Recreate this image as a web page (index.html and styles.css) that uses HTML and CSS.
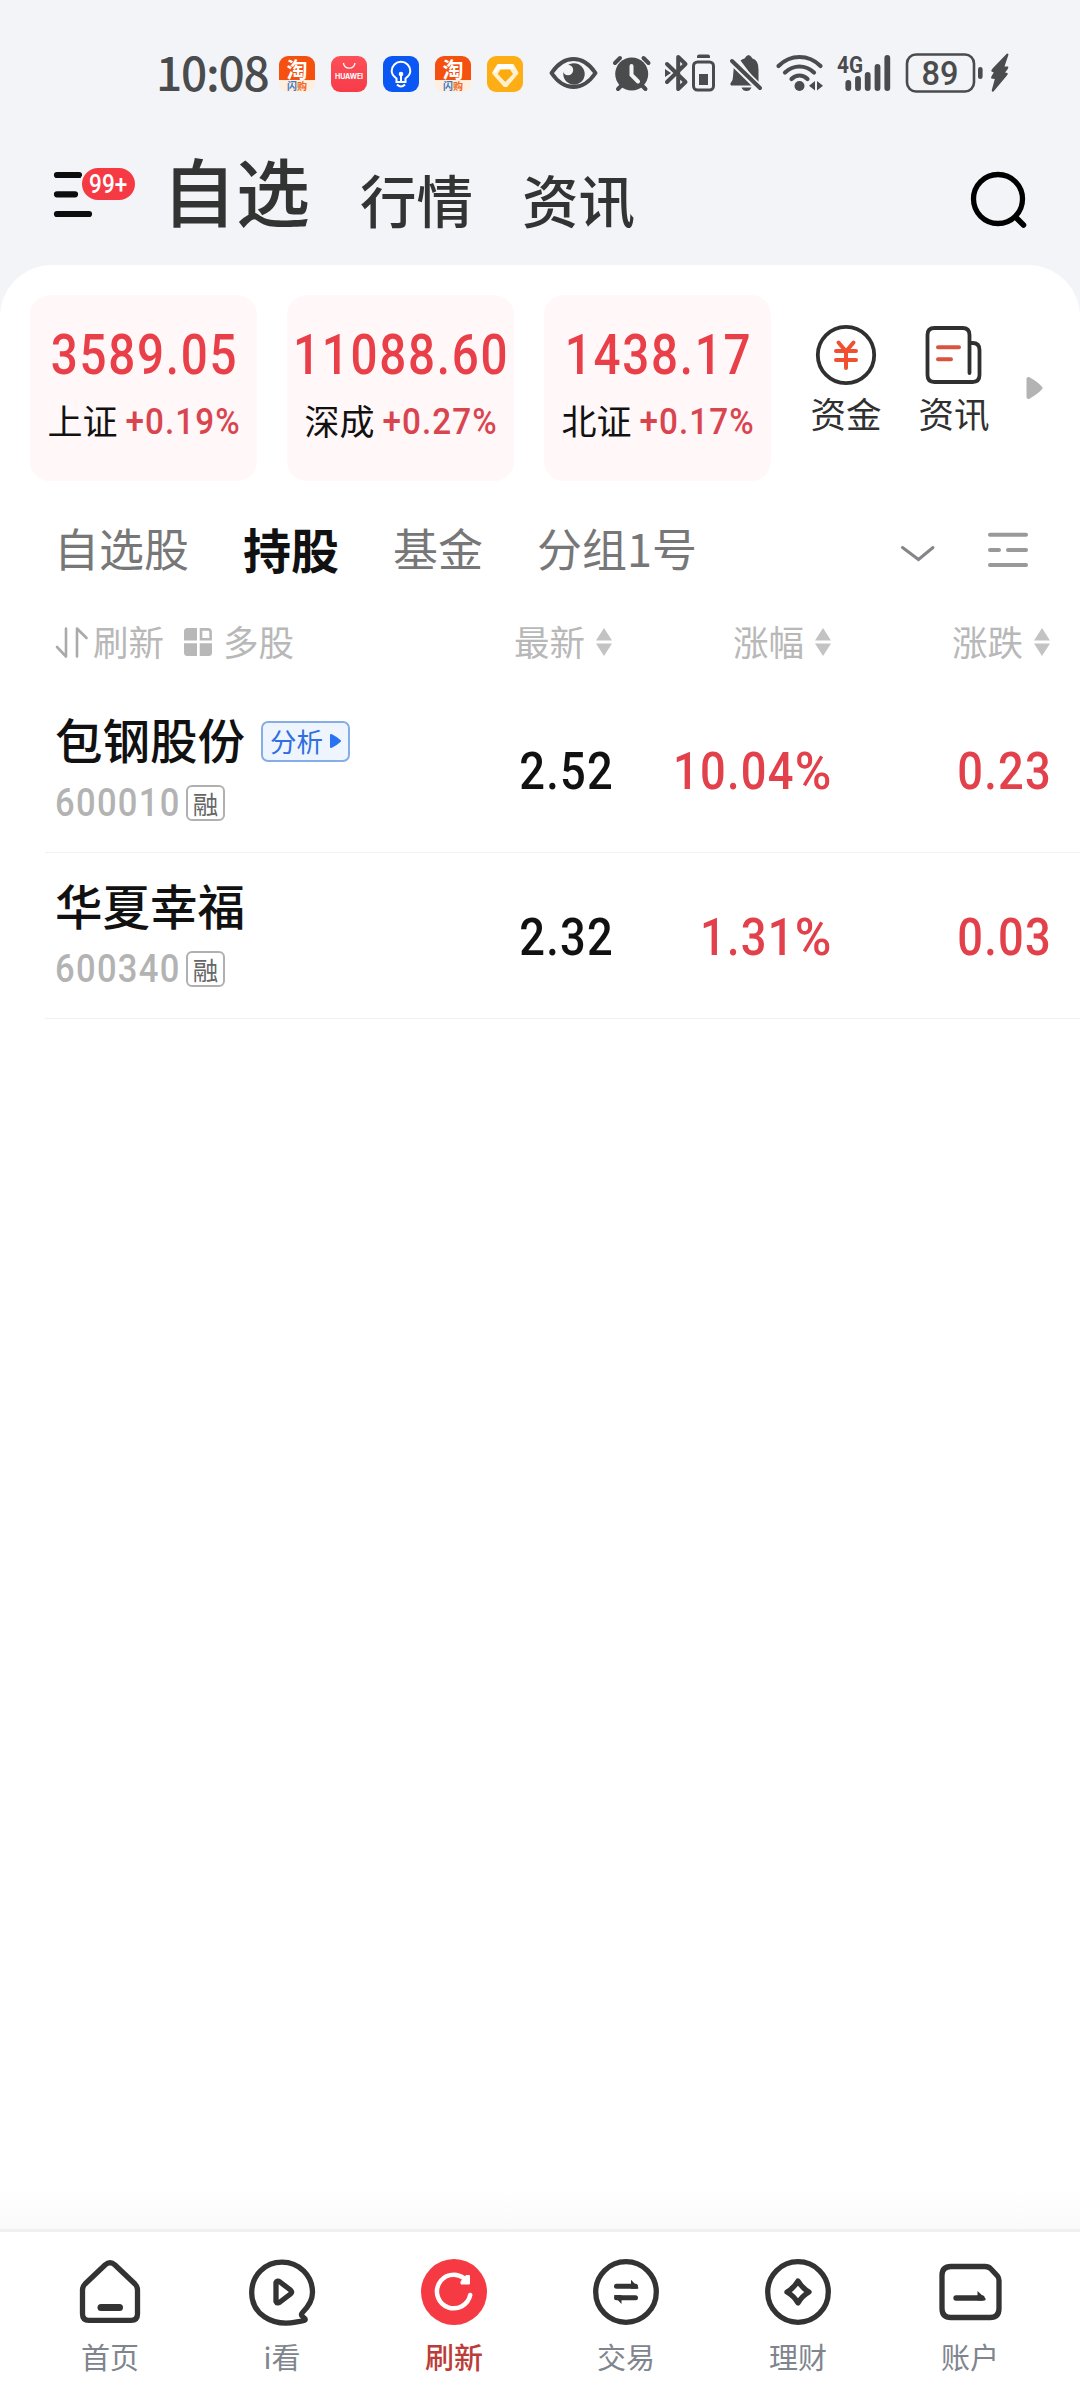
FILE: index.html
```html
<!DOCTYPE html>
<html lang="zh-CN">
<head>
<meta charset="utf-8">
<title>自选</title>
<link rel="stylesheet" href="styles.css">
</head>
<body>
<div class="app">
  <header class="status">
    <span class="clock">10:08</span>
    <div class="notices">
      <span class="app-icon taobao"><b>淘</b><i><em>闪</em>购</i></span>
      <span class="app-icon huawei">
        <svg width="36" height="14" viewBox="0 0 36 14"><path d="M12.500 7a5.700 5.200 0 0 0 11.400 0" fill="none" stroke="#fff" stroke-width="1.300"/></svg>
        <b>HUAWEI</b>
      </span>
      <span class="app-icon bulb">
        <svg width="36" height="36" viewBox="0 0 36 36" fill="none" stroke="#fff" stroke-width="2"><path d="M13.500 26v-3.500C10 20 8.700 17.500 8.700 15a9.300 9.300 0 0 1 18.600 0c0 2.500-1.300 5-4.800 7.500V26zM14 28.500q4 4 8 0M18 18v8"/><circle cx="18" cy="18" r="1.300" fill="#fff"/></svg>
      </span>
      <span class="app-icon taobao"><b>淘</b><i><em>闪</em>购</i></span>
      <span class="app-icon gem">
        <svg width="36" height="36" viewBox="0 0 36 36"><path d="M11 9h15l4.500 8L19.500 30h-2L6 17z" fill="#fff1cf" stroke="#fff1cf" stroke-width="2" stroke-linejoin="round"/><path d="M11 8h14l2.500 5H12l-4 4-2-1z" fill="#fff"/><path d="M13.500 13.500h9.500l3 4.500-7.700 8L10.700 18z" fill="#fbab10"/></svg>
      </span>
    </div>
    <div class="system">
      <svg width="66" height="46" viewBox="540 50 66 46"><path d="M551.500 73Q561 59 573.500 59T595.500 73Q586 87 573.500 87T551.500 73z" fill="none" stroke="#4a4b4d" stroke-width="4" stroke-linejoin="round"/><circle cx="574" cy="74" r="10.700" fill="#4a4b4d"/><circle cx="568" cy="70" r="5.200" fill="#f3f4f8"/></svg>
      <svg width="52" height="46" viewBox="606 50 52 46"><g fill="none" stroke="#4a4b4d" stroke-width="4" stroke-linecap="round"><path d="M615 63l5-5M648.500 63l-5-5M618 89l4-4M645.500 89l-4-4"/></g><circle cx="631.700" cy="74" r="16.500" fill="#4a4b4d"/><path d="M631.500 66v9l6.500 6.500" fill="none" stroke="#f3f4f8" stroke-width="4" stroke-linecap="round"/></svg>
      <svg width="64" height="46" viewBox="658 50 64 46"><g fill="none" stroke="#4a4b4d" stroke-width="4" stroke-linejoin="round" stroke-linecap="round"><path d="M667 64l18.500 18-7.300 7V57l7.300 7-18.500 18"/><rect x="693.500" y="62" width="20" height="28" rx="4" stroke-width="3"/></g><path d="M665 69l6 4-6 4zM697 56.500q0-2 2-2h9q2 0 2 2v1.500h-13zM699 74h9v11h-9z" fill="#4a4b4d"/></svg>
      <svg width="48" height="46" viewBox="722 50 48 46"><g fill="#4a4b4d"><path d="M740.500 60.500q2-1.500 4-2 2-3.500 4-3.500t4 3.500q6 1.500 6 11v15zM734 65l20 20.500h-23q-1.500-1.500 0-3 2-2 2-6zM741.500 87.500h10q-1.500 3.500-5 3.500t-5-3.500z"/></g><path d="M731 60l29 28.500" stroke="#f3f4f8" stroke-width="8"/><path d="M732 61l28 27" stroke="#4a4b4d" stroke-width="4" stroke-linecap="round"/></svg>
      <svg width="60" height="46" viewBox="770 50 60 46"><g fill="none" stroke="#4a4b4d" stroke-width="4.200" stroke-linecap="round"><path d="M778.500 66q9-9 21-9t21 9M785 72.500q6.500-6 14.500-6t14.500 6M791.500 79q3.500-3.500 8-3.500t8 3.500"/></g><circle cx="799.500" cy="86" r="5" fill="#4a4b4d"/><path d="M815 81v9.500l-6-4.800zM817 81v9.500l6-4.800z" fill="#4a4b4d"/></svg>
      <svg width="70" height="46" viewBox="830 50 70 46"><text class="net" x="837" y="72.500" textLength="26" lengthAdjust="spacingAndGlyphs">4G</text><g stroke="#4a4b4d" stroke-width="5.800" stroke-linecap="round"><path d="M848.300 83v5M858 79v9M867.700 75v13M877.500 67v21M887.300 58v30"/></g></svg>
      <svg width="115" height="46" viewBox="900 50 115 46"><rect x="907" y="54.500" width="67" height="37" rx="9" fill="none" stroke="#4a4b4d" stroke-width="2.600"/><rect x="978" y="67" width="4.600" height="12" rx="2.300" fill="#4a4b4d"/><path d="M1007 53.500q2 0 1.200 2l-3.700 11h3.500q1.500 1-3 6l2.500.5q1 1-1 3l-13 15.500q-2 .8-1.700-1.500l3-11-3.500-.5q-1-.8 2.500-6l-2.300-1q-.8-1 1.500-3.500z" fill="#4a4b4d"/><text class="charge" x="921.500" y="84.500" textLength="37" lengthAdjust="spacingAndGlyphs">89</text></svg>
    </div>
  </header>

  <nav class="top">
    <div class="menu">
      <svg width="46" height="50" viewBox="52 170 46 50"><path d="M57 175h22M57 194.300h18M57 214h32" stroke="#0d0d0d" stroke-width="6.200" stroke-linecap="round"/></svg>
      <span class="count"><span>99+</span></span>
    </div>
    <a class="title on">自选</a>
    <a class="title quotes">行情</a>
    <a class="title news">资讯</a>
    <svg class="search" width="64" height="64" viewBox="966 168 64 64" fill="none" stroke="#000" stroke-linecap="round"><circle cx="998" cy="199" r="24.500" stroke-width="5.300"/><path d="M1015.500 217l8 8" stroke-width="5.500"/></svg>
  </nav>

  <main class="panel">
    <section class="indices">
      <div class="card"><div class="value"><span>3589.05</span></div><div class="change">上证<span class="pct"><span>+0.19%</span></span></div></div>
      <div class="card"><div class="value"><span>11088.60</span></div><div class="change">深成<span class="pct"><span>+0.27%</span></span></div></div>
      <div class="card"><div class="value"><span>1438.17</span></div><div class="change">北证<span class="pct"><span>+0.17%</span></span></div></div>
      <div class="quick">
        <svg width="64" height="64" viewBox="814 323 64 64" fill="none" stroke-linecap="round"><circle cx="846" cy="355" r="28.200" stroke="#303030" stroke-width="3.800"/><g stroke="#ee5030" stroke-width="4"><path d="M838.500 342.500l7.500 9 7.500-9M836 351h20M836 360h20M846 352v16"/></g></svg>
        <span>资金</span>
      </div>
      <div class="quick">
        <svg width="64" height="64" viewBox="923 323 64 64" fill="none" stroke-linecap="round"><path d="M970.500 373v-38q0-7-7-7h-28q-7 0-7 7v40q0 7 7 7h38q7 0 7-7v-25q0-7-7-7h-2" stroke="#303030" stroke-width="3.800"/><path d="M939 347.200h21M939 359.200h13" stroke="#d9543e" stroke-width="4"/></svg>
        <span>资讯</span>
      </div>
      <svg class="more" width="18" height="24" viewBox="1025 376 18 24"><path d="M1028.500 379v18q8-4.500 12-9-4-4.500-12-9z" fill="#b3b3b3" stroke="#b3b3b3" stroke-width="4" stroke-linejoin="round"/></svg>
    </section>

    <nav class="groups">
      <a>自选股</a><a class="on">持股</a><a>基金</a><a>分组1号</a>
      <svg width="128" height="44" viewBox="900 528 128 44" fill="none" stroke-linecap="round"><path d="M902.500 547.500l16 12 14.500-12" stroke="#85858a" stroke-width="3"/><path d="M990 534.700h36M990 550h9M1008 550h18M990 565h36" stroke="#999" stroke-width="4"/></svg>
    </nav>

    <div class="heads">
      <svg width="34" height="34" viewBox="55 625 34 34"><path d="M57 651l9 9.500V632.500M77 660.500V632.500l9.500 9.500" transform="translate(0 -4)" fill="none" stroke="#aaa" stroke-width="2.600" stroke-linecap="round" stroke-linejoin="round"/></svg>
      <span class="refresh">刷新</span>
      <svg class="tiles" width="28" height="28" viewBox="0 0 28 28" fill="#b8b8b8"><path d="M3.500 0H13v12.500H0v-9Q0 0 3.500 0zM0 15.200h13V28H3.500Q0 28 0 24.500zM15.700 15.200H28v9.300q0 3.500-3.500 3.500h-8.800z"/><path d="M17 1.400h7q2.600 0 2.600 2.600v7.300H17z" fill="none" stroke="#b8b8b8" stroke-width="2.600"/></svg>
      <span class="multi">多股</span>
      <span class="col price">最新<svg width="16" height="30" viewBox="0 0 16 30"><path d="M8 1l8 12.500H0zM8 29l8-12.500H0z"/></svg></span>
      <span class="col">涨幅<svg width="16" height="30" viewBox="0 0 16 30"><path d="M8 1l8 12.500H0zM8 29l8-12.500H0z"/></svg></span>
      <span class="col">涨跌<svg width="16" height="30" viewBox="0 0 16 30"><path d="M8 1l8 12.500H0zM8 29l8-12.500H0z"/></svg></span>
    </div>

    <div class="stock">
      <div class="who">
        <div class="name">包钢股份<span class="tag">分析<svg width="12" height="16" viewBox="0 0 12 16"><path d="M1 2v12q6-3 9-6-3-3-9-6z" fill="#2a72f5" stroke="#2a72f5" stroke-width="2" stroke-linejoin="round"/></svg></span></div>
        <div class="code"><span class="digits"><span>600010</span></span><span class="margin">融</span></div>
      </div>
      <div class="num"><span>2.52</span></div>
      <div class="num up"><span>10.04<i>%</i></span></div>
      <div class="num up"><span>0.23</span></div>
    </div>
    <div class="stock">
      <div class="who">
        <div class="name">华夏幸福</div>
        <div class="code"><span class="digits"><span>600340</span></span><span class="margin">融</span></div>
      </div>
      <div class="num"><span>2.32</span></div>
      <div class="num up"><span>1.31<i>%</i></span></div>
      <div class="num up"><span>0.03</span></div>
    </div>
  </main>

  <nav class="tabbar">
    <a><svg width="68" height="68" viewBox="76 2258 68 68" fill="none" stroke="#333" stroke-width="5.300"><path d="M105 2265.500q5-4.500 10 0l20 19q2.500 2.500 2.500 6v24q0 6.300-6.500 6.300H89q-6.500 0-6.500-6.300v-24q0-3.500 2.500-6z" transform="translate(0 -.5)" stroke-linejoin="round"/><path d="M101 2307.500h18.500" stroke-width="7" stroke-linecap="round"/></svg>首页</a>
    <a><svg width="68" height="68" viewBox="248 2258 68 68" fill="none" stroke="#333" stroke-width="5.300" stroke-linejoin="round"><path d="M303 2317c-2-1.500-2-3-.5-4.500 6.500-6.500 10-13 10-20 0-17-13.500-30.300-30.500-30.300s-30.300 13-30.300 30.500c0 21 20 34 44 29.500 4-.7 7.500-.8 9.300-2.200.8-1.500-.5-2-2-3z"/><path d="M276 2282.500q1-2.500 4-.5l10.500 8q2 2 0 4L280 2302q-3 2-4-.5z"/></svg>i看</a>
    <a class="on"><svg width="68" height="68" viewBox="420 2258 68 68"><circle cx="454" cy="2292" r="33" fill="#f63a44"/><path d="M463.500 2277.800A16.800 16.800 0 1 0 470.200 2295" fill="none" stroke="#fff" stroke-width="4.500" stroke-linecap="round"/><path d="M469.500 2275.500v8.500h-8.500v-2.500l5-6z" fill="#fff" stroke="#fff" stroke-width="1"/></svg>刷新</a>
    <a><svg width="68" height="68" viewBox="592 2258 68 68" fill="none" stroke="#333" stroke-width="5.300"><circle cx="626" cy="2292" r="30.300"/><path d="M616.500 2286.300h19M616.500 2297.700h19" stroke-linecap="round" stroke-width="5"/><path d="M631 2288.800v-9l7.500 8-.5 1zM621.500 2295v9l-7.500-8 .5-1z" fill="#333" stroke="none"/></svg>交易</a>
    <a><svg width="68" height="68" viewBox="764 2258 68 68" fill="none" stroke="#333" stroke-width="5.300"><circle cx="798" cy="2292" r="30.300"/><path d="M798 2281q4 7 11 11-7 4-11 11-4-7-11-11 7-4 11-11z" stroke-linejoin="round"/></svg>理财</a>
    <a><svg width="68" height="68" viewBox="936 2258 68 68" fill="none" stroke="#333" stroke-width="5.300"><path d="M951 2266.500h34q3.500 0 6 2.500l6.500 7q1.500 2 1.500 4.500v28q0 9-9 9h-39q-9 0-9-9v-33q0-9 9-9z" stroke-linejoin="round"/><path d="M956 2298h26" stroke-linecap="round"/><path d="M977.500 2297v-6l8 7.500q.7 2-1 2.100h-7z" fill="#333" stroke="none"/></svg>账户</a>
  </nav>
</div>
</body>
</html>
```
FILE: styles.css
```css
* { box-sizing: border-box; }
body {
  margin: 0;
  background: #f3f4f8;
  font-family: "Noto Sans CJK SC", sans-serif;
  color: #111;
}
i, em { font-style: normal; }
svg { display: block; flex: none; }
.app { width: 1080px; height: 2400px; display: flex; flex-direction: column; overflow: hidden; }

/* system status bar */
.status { height: 130px; padding: 50px 0 0 156px; display: flex; align-items: flex-start; flex: none; }
.clock { width: 123px; font-size: 46px; font-weight: 500; line-height: 46px; margin-top: -2px; height: 46px; color: #4a4b4d; white-space: nowrap; letter-spacing: -1.200px; }
.notices { display: flex; gap: 16px; margin-top: 6px; width: 261px; }
.app-icon { width: 36px; height: 36px; border-radius: 9px; flex: none; display: flex; flex-direction: column; align-items: center; }
.taobao { background: linear-gradient(#f4500f 68%, #fdeedd 68%); }
.taobao b { color: #fff; font-size: 21px; line-height: 24px; height: 24px; }
.taobao i { color: #f0641e; font-size: 10px; line-height: 12px; font-weight: 700; }
.taobao em { color: #3c78c8; }
.huawei { background: linear-gradient(#fd5058, #f73b49); }
.huawei b { color: #fff; font: 700 7px/13px "Inter", sans-serif; letter-spacing: -.1px; }
.bulb { background: #0b57f4; }
.gem { background: #fcae14; }
.system { display: flex; }
.net { font: 700 23px Roboto, sans-serif; fill: #4a4b4d; }
.charge { font: 500 34px Roboto, sans-serif; fill: #4a4b4d; }

/* page titles */
.top { height: 135px; flex: none; display: flex; align-items: flex-start; padding-left: 52px; color: #333; font-weight: 500; }
.menu { position: relative; width: 110px; padding-top: 40px; }
.count { position: absolute; left: 28px; top: 36px; width: 57px; height: 36px; border: 2px solid #f3f4f8; border-radius: 18px; background: #f63a44; color: #fff; display: flex; justify-content: center; }
.count span { font: 500 25px/34px Roboto, sans-serif; transform: scaleX(.9); }
.title { font-size: 56.500px; line-height: 80px; margin-top: 28px; white-space: nowrap; }
.title.on { font-size: 74px; line-height: 90px; margin-top: 14px; width: 198px; }
.quotes { width: 162px; }
.top .news { width: 120px; }
.top .search { margin: 38px 50px 0 auto; }

/* content panel */
.panel { flex: 1; border-radius: 52px 52px 0 0; background: linear-gradient(#fff calc(100% - 40px), #fafafa); min-height: 0; }
.indices { display: flex; padding: 30px 0 0 30px; height: 246px; }
.card { width: 227px; height: 186px; margin-right: 30px; border-radius: 20px; background: #fff7f8; display: flex; flex-direction: column; align-items: center; flex: none; }
.value { height: 60px; margin-top: 30px; display: flex; justify-content: center; width: 227px; color: #e93f49; }
.value span { font: 500 55px/60px Roboto, sans-serif; letter-spacing: 2px; margin-right: -2px; transform: scaleX(.865); flex: none; }
.change { display: flex; font-size: 35px; line-height: 50px; margin-top: 10px; width: 192px; white-space: nowrap; justify-content: space-between; }
.pct { width: 113px; color: #d9454f; display: flex; justify-content: flex-end; }
.pct span { font: 500 36.500px/54px Roboto, sans-serif; letter-spacing: 1.200px; margin-right: -1px; transform: scaleX(.91); transform-origin: right; flex: none; }
.quick { width: 108px; display: flex; flex-direction: column; align-items: center; padding-top: 28px; font-size: 35.500px; line-height: 50px; color: #303030; }
.card + .quick { margin-left: -9px; }
.quick span { margin-top: 1px; }
.more { margin: 81px 0 0 17px; }

/* watchlist groups */
.groups { display: flex; height: 76px; align-items: center; padding-left: 54px; font-size: 45px; color: #777; white-space: nowrap; }
.groups a { line-height: 74px; height: 76px; margin-right: 54px; }
.groups a.on { font-size: 48px; font-weight: 700; color: #111; }
.groups svg { margin: 2px 52px 0 auto; }

/* column headings */
.heads { display: flex; align-items: center; height: 100px; padding: 7px 30px 0 55px; font-size: 35.500px; color: #b8b8b8; white-space: nowrap; }
.heads svg { margin-top: 3px; }
.refresh { margin-left: 4px; width: 91px; }
.multi { margin-left: 11px; }
.col { width: 219px; display: flex; justify-content: flex-end; align-items: center; gap: 11px; }
.col svg { fill: #c3c3c3; }
.price { margin-left: auto; }

/* stock rows */
.stock { height: 166px; margin-left: 45px; padding: 0 30px 0 10px; border-bottom: 1.500px solid #f2f2f2; display: flex; }
.who { flex: 1; }
.name { display: flex; align-items: center; font-size: 47.500px; line-height: 60px; height: 60px; margin-top: 22px; font-weight: 500; }
.tag { margin: 4px 0 0 16px; width: 89px; height: 41px; border: 2px solid #86aee6; border-radius: 7px; background: #eff5fe; color: #2f6fdf; font-size: 26.500px; line-height: 36px; font-weight: 400; display: flex; align-items: center; padding-left: 7px; gap: 7px; }
.code { display: flex; height: 40px; align-items: center; margin-top: 14px; }
.digits { width: 131px; color: #b3b3b3; }
.digits span { display: inline-block; font: 500 39.500px/40px Roboto, sans-serif; letter-spacing: 1.500px; transform: scaleX(.875); transform-origin: left; }
.margin { width: 39px; height: 36px; border: 2px solid #b0b0b0; border-radius: 6px; font-size: 25.500px; line-height: 31px; text-align: center; color: #666; }
.num { width: 219px; display: flex; justify-content: flex-end; padding-top: 55px; }
.num span { font: 500 52px/60px Roboto, sans-serif; letter-spacing: 1.500px; transform: scaleX(.87); transform-origin: right; margin-right: -2px; }
.num i { display: inline-block; font-weight: 500; transform: scaleX(1.1); transform-origin: right; margin-left: 4px; }
.up { color: #e2414b; }

/* bottom navigation */
.tabbar { height: 171px; flex: none; background: #fff; border-top: 3px solid #f0f0f0; padding: 26px 24px 0; display: grid; grid-template-columns: repeat(6, 172px); }
.tabbar a { display: flex; flex-direction: column; align-items: center; font-size: 29px; line-height: 40px; gap: 10px; color: #80858d; }
.tabbar a.on { color: #bb3d38; font-weight: 500; }
```
